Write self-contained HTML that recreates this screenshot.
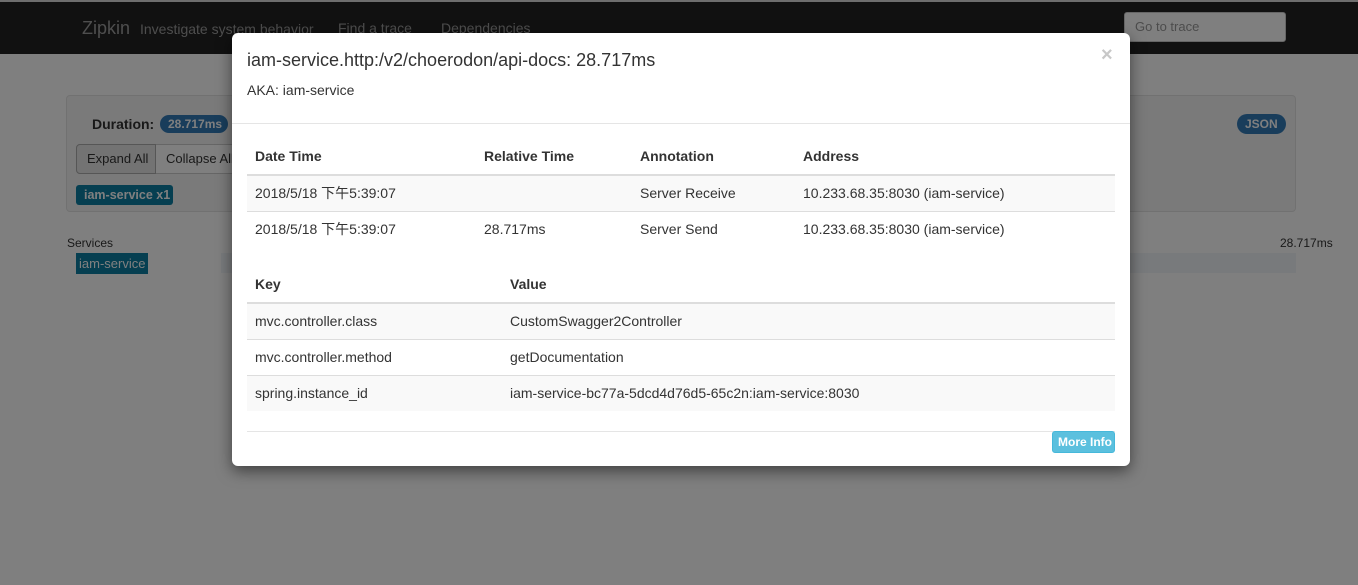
<!DOCTYPE html>
<html><head><meta charset="utf-8"><style>
*{box-sizing:border-box;margin:0;padding:0}
body{width:1358px;height:585px;overflow:hidden;background:#fff;font-family:"Liberation Sans","Noto Sans CJK SC",sans-serif;font-size:14px;color:#333;position:relative}
.abs{position:absolute}
.nav{left:0;top:2px;width:1358px;height:52px;background:#222;border-top:0}
.overlay{left:0;top:0;width:1358px;height:585px;background:rgba(0,0,0,0.5)}
.modal{left:232px;top:33px;width:898px;height:433px;background:#fff;border-radius:6px;box-shadow:0 5px 15px rgba(0,0,0,.5)}
.t{position:absolute;white-space:nowrap;line-height:16px}
.b{font-weight:bold}
</style></head><body>
<div class="abs" style="left:0;top:0;width:1358px;height:2px;background:#ddd"></div>
<div class="abs nav"></div>
<div class="t" style="left:82px;top:18px;font-size:18px;line-height:20px;color:#9d9d9d">Zipkin</div>
<div class="t" style="left:140px;top:21px;color:#9d9d9d">Investigate system behavior</div>
<div class="t" style="left:338px;top:20px;color:#9d9d9d">Find a trace</div>
<div class="t" style="left:441px;top:20px;color:#9d9d9d">Dependencies</div>
<div class="abs" style="left:1124px;top:12px;width:162px;height:30px;background:#fff;border:1px solid #ccc;border-radius:3px"></div>
<div class="t" style="left:1135px;top:19px;font-size:13px;color:#999">Go to trace</div>
<div class="abs" style="left:66px;top:95px;width:1230px;height:117px;background:#f5f5f5;border:1px solid #e3e3e3;border-radius:4px"></div>
<div class="t b" style="left:92px;top:116px">Duration:</div>
<div class="abs" style="left:160px;top:115px;width:68px;height:18px;background:#337ab7;border-radius:9px"></div>
<div class="t b" style="left:168px;top:116px;color:#fff;font-size:12px">28.717ms</div>
<div class="abs" style="left:76px;top:144px;width:160px;height:30px;border:1px solid #ccc;border-radius:4px;background:#fff"></div>
<div class="abs" style="left:76px;top:144px;width:80px;height:30px;background:#e6e6e6;border:1px solid #adadad;border-radius:4px 0 0 4px"></div>
<div class="t" style="left:87px;top:151px;font-size:13px">Expand All</div>
<div class="t" style="left:166px;top:151px;font-size:13px">Collapse All</div>
<div class="abs" style="left:76px;top:185px;width:97px;height:20px;background:#0c7fa3;border-radius:3px"></div>
<div class="t b" style="left:84px;top:187px;color:#fff;font-size:12.5px">iam-service x1</div>
<div class="abs" style="left:1237px;top:114px;width:49px;height:20px;background:#337ab7;border-radius:10px"></div>
<div class="t b" style="left:1245px;top:116px;color:#fff;font-size:12px">JSON</div>
<div class="t" style="left:67px;top:235px;font-size:12px">Services</div>
<div class="t" style="left:1280px;top:235px;font-size:12px">28.717ms</div>
<div class="abs" style="left:76px;top:253px;width:72px;height:21px;background:#0c7fa3"></div>
<div class="t" style="left:79px;top:256px;color:#fff;font-size:13px">iam-service</div>
<div class="abs" style="left:221px;top:253px;width:1075px;height:20px;background:#f0f4f8"></div>
<div class="abs overlay"></div>
<div class="abs modal">
 <div class="t" style="left:15px;top:17px;font-size:18px;line-height:20px">iam-service.http:/v2/choerodon/api-docs: 28.717ms</div>
 <div class="t b" style="left:869px;top:14px;font-size:20px;color:#c8c8c8">×</div>
 <div class="t" style="left:15px;top:49px">AKA: iam-service</div>
 <div class="abs" style="left:0;top:90px;width:898px;height:1px;background:#e5e5e5"></div>
 <div class="abs" style="left:15px;top:141px;width:868px;height:2px;background:#ddd"></div>
 <div class="t b" style="left:23px;top:115px">Date Time</div>
 <div class="t b" style="left:252px;top:115px">Relative Time</div>
 <div class="t b" style="left:408px;top:115px">Annotation</div>
 <div class="t b" style="left:571px;top:115px">Address</div>
 <div class="abs" style="left:15px;top:143px;width:868px;height:36px;background:#f9f9f9;border-bottom:1px solid #ddd"></div>
 <div class="t" style="left:23px;top:152px">2018/5/18 下午5:39:07</div>
 <div class="t" style="left:408px;top:152px">Server Receive</div>
 <div class="t" style="left:571px;top:152px">10.233.68.35:8030 (iam-service)</div>
 <div class="t" style="left:23px;top:188px">2018/5/18 下午5:39:07</div>
 <div class="t" style="left:252px;top:188px">28.717ms</div>
 <div class="t" style="left:408px;top:188px">Server Send</div>
 <div class="t" style="left:571px;top:188px">10.233.68.35:8030 (iam-service)</div>
 <div class="t b" style="left:23px;top:243px">Key</div>
 <div class="t b" style="left:278px;top:243px">Value</div>
 <div class="abs" style="left:15px;top:269px;width:868px;height:2px;background:#ddd"></div>
 <div class="abs" style="left:15px;top:271px;width:868px;height:36px;background:#f9f9f9;border-bottom:1px solid #ddd"></div>
 <div class="t" style="left:23px;top:280px">mvc.controller.class</div>
 <div class="t" style="left:278px;top:280px">CustomSwagger2Controller</div>
 <div class="abs" style="left:15px;top:342px;width:868px;height:1px;background:#ddd"></div>
 <div class="t" style="left:23px;top:316px">mvc.controller.method</div>
 <div class="t" style="left:278px;top:316px">getDocumentation</div>
 <div class="abs" style="left:15px;top:343px;width:868px;height:35px;background:#f9f9f9"></div>
 <div class="t" style="left:23px;top:352px">spring.instance_id</div>
 <div class="t" style="left:278px;top:352px">iam-service-bc77a-5dcd4d76d5-65c2n:iam-service:8030</div>
 <div class="abs" style="left:15px;top:398px;width:868px;height:1px;background:#e5e5e5"></div>
 <div class="abs" style="left:820px;top:398px;width:63px;height:22px;background:#5bc0de;border:1px solid #46b8da;border-radius:3px"></div>
 <div class="t b" style="left:826px;top:401px;color:#fff;font-size:12px">More Info</div>
</div>
</body></html>
